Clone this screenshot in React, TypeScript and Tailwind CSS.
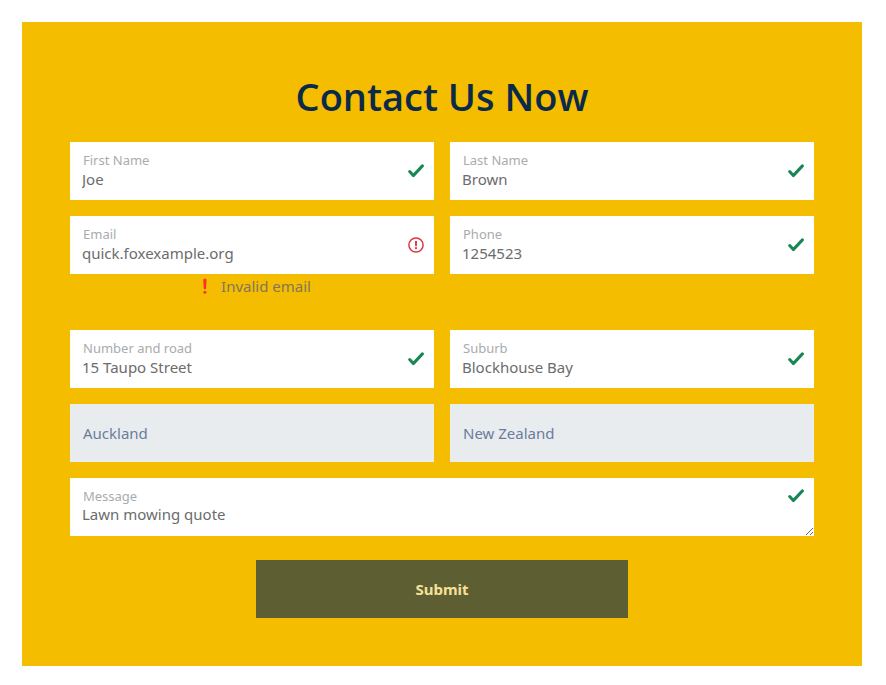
import { useState } from "react";

type FieldProps = {
  id: string;
  label: string;
  value: string;
  type?: string;
  invalid?: boolean;
  error?: string;
};

function CheckIcon() {
  return (
    <svg viewBox="0 0 16 16" className="h-4 w-4" fill="none" aria-hidden="true">
      <path
        stroke="#198754"
        strokeWidth="3"
        strokeLinecap="round"
        strokeLinejoin="round"
        d="M1.7 8.6 5.3 12.6 14.4 2.9"
      />
    </svg>
  );
}

function AlertIcon() {
  return (
    <svg viewBox="0 0 16 16" className="h-4 w-4" fill="none" stroke="#dc3545" aria-hidden="true">
      <circle cx="8" cy="8" r="7.1" strokeWidth="1.5" />
      <path strokeWidth="1.5" strokeLinejoin="round" d="M7.7 4.7h.6L8.1 8.7h-.2z" />
      <circle cx="8" cy="11.2" r="1.1" fill="#dc3545" stroke="none" />
    </svg>
  );
}

function ExclamationMark() {
  return (
    <svg viewBox="0 0 20 16" className="h-4 w-5" fill="#f8312f" aria-hidden="true">
      <path d="M10.3 2a1.6 1.6 0 0 1 3.2 0l-.4 8a1.2 1.2 0 0 1-2.4 0z" />
      <circle cx="11.9" cy="14.2" r="1.5" />
    </svg>
  );
}

const labelStyle = "pointer-events-none absolute left-[13px] top-2 text-[13px] leading-5 text-[#a9abae]";
const controlStyle = "block w-full bg-white px-3 text-[15px] leading-5 text-[#6c6c6c] outline-none";

function Field({ id, label, value, type = "text", invalid = false, error }: FieldProps) {
  const [text, setText] = useState(value);
  return (
    <div>
      <div className="relative">
        <input
          id={id}
          type={type}
          value={text}
          onChange={(e) => setText(e.target.value)}
          aria-invalid={invalid}
          className={`${controlStyle} h-[58px] pr-10 pt-4`}
        />
        <label htmlFor={id} className={labelStyle}>
          {label}
        </label>
        <span className="pointer-events-none absolute inset-y-0 right-[10px] flex items-center">
          {invalid ? <AlertIcon /> : <CheckIcon />}
        </span>
      </div>
      {error && (
        <p className="mb-4 flex items-center justify-center gap-2 text-[15px] leading-6 text-[#85755c]">
          <ExclamationMark />
          {error}
        </p>
      )}
    </div>
  );
}

function LockedField({ label, value }: { label: string; value: string }) {
  return (
    <input
      aria-label={label}
      value={value}
      disabled
      className="block h-[58px] w-full bg-[#e9ecef] px-[13px] text-[15px] leading-6 text-[#6b7c9c]"
    />
  );
}

export default function App() {
  const [message, setMessage] = useState("Lawn mowing quote");
  return (
    <main className="py-[22px] pl-[22px] pr-6 font-['Noto_Sans',sans-serif]">
      <form className="bg-[#f4bd00] p-12" noValidate onSubmit={(e) => e.preventDefault()}>
        <h1 className="mb-5 text-center font-['Open_Sans',sans-serif] text-[38px] font-semibold leading-[52px] text-[#0b2a4a]">
          Contact Us Now
        </h1>
        <div className="grid grid-cols-2 gap-4">
          <Field id="first" label="First Name" value="Joe" />
          <Field id="last" label="Last Name" value="Brown" />
          <Field id="email" label="Email" type="email" value="quick.foxexample.org" invalid error="Invalid email" />
          <Field id="phone" label="Phone" type="tel" value="1254523" />
          <Field id="road" label="Number and road" value="15 Taupo Street" />
          <Field id="suburb" label="Suburb" value="Blockhouse Bay" />
          <LockedField label="City" value="Auckland" />
          <LockedField label="Country" value="New Zealand" />
          <div className="relative col-span-2">
            <textarea
              id="message"
              value={message}
              onChange={(e) => setMessage(e.target.value)}
              className={`${controlStyle} h-[58px] resize-y overflow-hidden pr-10 pt-[26px]`}
            />
            <label htmlFor="message" className={labelStyle}>
              Message
            </label>
            <span className="pointer-events-none absolute right-[10px] top-[10px]">
              <CheckIcon />
            </span>
          </div>
        </div>
        <button
          type="submit"
          className="mx-auto mt-6 block h-[58px] w-1/2 bg-[#5d5e32] text-[15px] font-bold leading-6 text-[#f7e09a]"
        >
          Submit
        </button>
      </form>
    </main>
  );
}
